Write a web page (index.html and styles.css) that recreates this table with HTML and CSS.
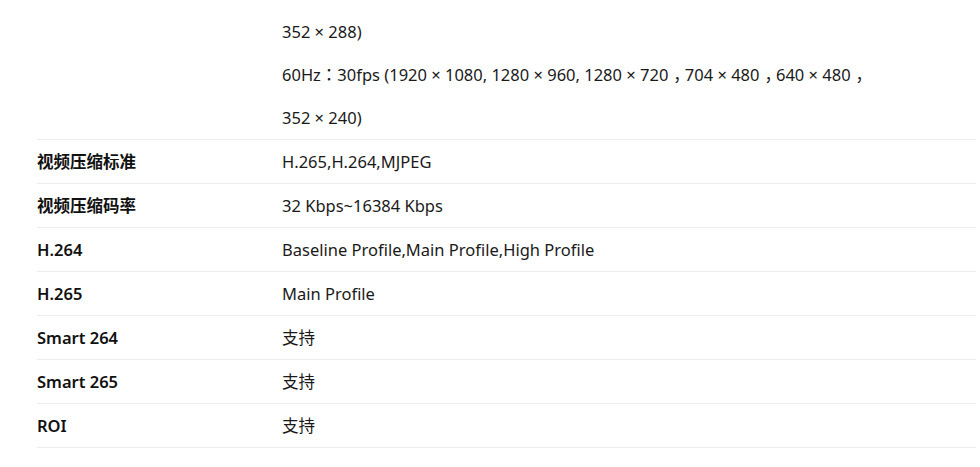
FILE: index.html
```html
<!DOCTYPE html>
<html lang="zh-CN">
<head>
<meta charset="utf-8">
<title>参数</title>
<link rel="stylesheet" href="styles.css">
</head>
<body>
<div class="page">
  <div class="spec">
    <div class="row">
      <div class="label"></div>
      <div class="value">
        <p class="line">352 × 288)</p>
        <p class="line">60Hz<span class="punct" lang="zh-Hant-TW">：</span>30fps (1920 × 1080, 1280 × 960, 1280 × 720<span class="comma">，</span>704 × 480<span class="comma">，</span>640 × 480<span class="comma">，</span></p>
        <p class="line">352 × 240)</p>
      </div>
    </div>
    <div class="row">
      <div class="label">视频压缩标准</div>
      <div class="value">H.265,H.264,MJPEG</div>
    </div>
    <div class="row">
      <div class="label">视频压缩码率</div>
      <div class="value">32 Kbps~16384 Kbps</div>
    </div>
    <div class="row">
      <div class="label">H.264</div>
      <div class="value">Baseline Profile,Main Profile,High Profile</div>
    </div>
    <div class="row">
      <div class="label">H.265</div>
      <div class="value">Main Profile</div>
    </div>
    <div class="row">
      <div class="label">Smart 264</div>
      <div class="value">支持</div>
    </div>
    <div class="row">
      <div class="label">Smart 265</div>
      <div class="value">支持</div>
    </div>
    <div class="row">
      <div class="label">ROI</div>
      <div class="value">支持</div>
    </div>
  </div>
</div>
</body>
</html>
```
FILE: styles.css
```css
html, body {
  margin: 0;
  padding: 0;
  background: #ffffff;
}
.page {
  padding: 10px 4px 0 37px;
  font-family: "Noto Sans", "Noto Sans CJK SC", sans-serif;
  font-size: 16.5px;
  color: #1a1a1a;
}
.spec {
  display: flex;
  flex-direction: column;
}
.row {
  display: grid;
  grid-template-columns: 245px 1fr;
  border-bottom: 1px solid #ececec;
  line-height: 43px;
}
.label {
  font-weight: 600;
  color: #111;
}
.value {
  font-weight: 400;
}
.line {
  margin: 0;
}
.punct {
  font-family: "Noto Sans CJK TC", "Noto Sans CJK SC", sans-serif;
}
.comma {
  font-family: "Noto Sans CJK SC", sans-serif;
  padding-left: 0.3em;
  letter-spacing: -0.3em;
}
```
